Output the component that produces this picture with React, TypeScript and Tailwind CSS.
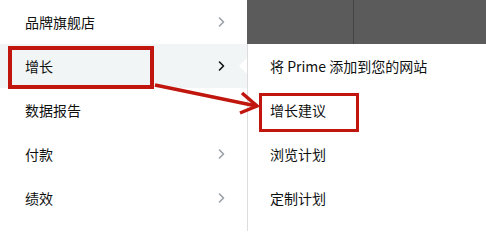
const leftItems = [
  { label: "品牌旗舰店", sub: true },
  { label: "增长", sub: true, active: true },
  { label: "数据报告", sub: false },
  { label: "付款", sub: true },
  { label: "绩效", sub: true },
];

const rightItems = ["将 Prime 添加到您的网站", "增长建议", "浏览计划", "定制计划"];

const Chevron = ({ dark }: { dark?: boolean }) => (
  <svg width="7" height="10" viewBox="0 0 7 10" fill="none">
    <polyline
      points="1.5,1 5.5,5 1.5,9"
      stroke={dark ? "#0f1111" : "#9aa0a6"}
      strokeWidth="1.6"
      strokeLinecap="round"
      strokeLinejoin="round"
    />
  </svg>
);

export default function App() {
  return (
    <div
      className="relative flex h-[231px] w-[486px] overflow-hidden bg-white text-[14px] text-[#0f1111]"
      style={{ fontFamily: '"Noto Sans CJK SC", "Noto Sans", sans-serif' }}
    >
      <div className="flex w-[247px] flex-col">
        {leftItems.map((item) => (
          <div
            key={item.label}
            className={`relative flex h-[44px] items-center justify-between pl-[25px] pr-[22px] ${
              item.active ? "bg-[#f2f5f5]" : ""
            }`}
          >
            <span>{item.label}</span>
            {item.sub && <Chevron dark={item.active} />}
            {item.active && (
              <div className="absolute right-0 top-[14px] h-0 w-0 border-y-[8px] border-r-[8px] border-y-transparent border-r-white" />
            )}
          </div>
        ))}
      </div>

      <div className="flex flex-1 flex-col">
        <div className="flex h-[44px]">
          <div className="w-[107px] border-r border-[#444] bg-[#5b5b5b]" />
          <div className="flex-1 bg-[#5b5b5b]" />
        </div>
        <div className="flex flex-1 flex-col border-l border-[#dcdcdc]">
          {rightItems.map((label) => (
            <div key={label} className="flex h-[44px] items-center pl-[22px]">
              {label}
            </div>
          ))}
        </div>
      </div>

      {/* annotations */}
      <div className="absolute left-[8px] top-[46px] h-[43px] w-[146px] border-[4px] border-[#c0160e]" />
      <div className="absolute left-[259px] top-[93px] h-[39px] w-[100px] border-[3px] border-[#c0160e]" />
      <svg className="absolute left-0 top-0" width="486" height="231" viewBox="0 0 486 231">
        <line x1="155" y1="85" x2="254" y2="105.5" stroke="#c0160e" strokeWidth="3.5" />
        <polyline
          points="242,93 257,106 240,113"
          fill="none"
          stroke="#c0160e"
          strokeWidth="3.5"
          strokeLinejoin="miter"
        />
      </svg>
    </div>
  );
}
